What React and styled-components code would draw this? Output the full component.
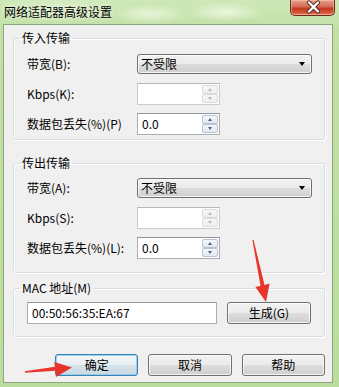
import React from 'react'
import styled, {createGlobalStyle, css} from 'styled-components'

const GlobalStyle = createGlobalStyle`
    html, body {
        margin: 0;
        padding: 0;
        background: #fff;
    }
    body {
        font-family: "Noto Sans CJK SC", "Noto Sans", sans-serif;
        font-size: 12px;
        color: #000;
    }
`

const App = () => {
    return (
        <>
            <GlobalStyle />
            <Window>
                <TitleBar>
                    <Title>网络适配器高级设置</Title>
                    <CloseButton>
                        <svg width="45" height="16" viewBox="0 0 45 16">
                            <path d="M18 3.5 L27 12.5 M27 3.5 L18 12.5" stroke="#5a2a22" strokeWidth="4.2" strokeLinecap="round" />
                            <path d="M18 3.5 L27 12.5 M27 3.5 L18 12.5" stroke="#fff" strokeWidth="2.4" strokeLinecap="round" />
                        </svg>
                    </CloseButton>
                </TitleBar>
                <Client>
                    <Group $pt={4} $pb={0}>
                        <Legend>传入传输</Legend>
                        <Row>
                            <Label>带宽(B):</Label>
                            <ComboBox>不受限<DropArrow /></ComboBox>
                        </Row>
                        <Row>
                            <Label>Kbps(K):</Label>
                            <SpinInput disabled />
                        </Row>
                        <Row>
                            <Label>数据包丢失(%)(P)</Label>
                            <SpinInput value="0.0" />
                        </Row>
                    </Group>
                    <Group $pt={3} $pb={9} $mt={16}>
                        <Legend>传出传输</Legend>
                        <Row>
                            <Label>带宽(A):</Label>
                            <ComboBox>不受限<DropArrow /></ComboBox>
                        </Row>
                        <Row>
                            <Label>Kbps(S):</Label>
                            <SpinInput disabled />
                        </Row>
                        <Row>
                            <Label>数据包丢失(%)(L):</Label>
                            <SpinInput value="0.0" />
                        </Row>
                    </Group>
                    <Group $pt={7} $pb={12} $mt={8}>
                        <Legend>MAC 地址(M)</Legend>
                        <MacRow>
                            <MacInput>00:50:56:35:EA:67</MacInput>
                            <Button>生成(G)</Button>
                        </MacRow>
                    </Group>
                    <ButtonBar>
                        <Button $default>确定</Button>
                        <Button>取消</Button>
                        <Button>帮助</Button>
                    </ButtonBar>
                </Client>
                <Arrows width="339" height="387" viewBox="0 0 339 387">
                    <polygon
                        fill="#e8352c"
                        points="253.6,239.9 264.5,285.0 269.6,283.6 266,302 255.4,286.9 260.5,285.8 252.4,240.1"
                    />
                    <polygon
                        fill="#e8352c"
                        points="25.1,372.8 55.3,370.8 55.9,377 72,367.5 54.3,362 54.9,366.8 24.9,371.2"
                    />
                </Arrows>
            </Window>
        </>
    )
}

const SpinInput = ({value, disabled}) => (
    <SpinBox $disabled={disabled}>
        <SpinText>{value}</SpinText>
        <SpinButtons>
            <SpinBtn $disabled={disabled}><Tri $up $disabled={disabled} /></SpinBtn>
            <SpinBtn $disabled={disabled}><Tri $disabled={disabled} /></SpinBtn>
        </SpinButtons>
    </SpinBox>
)

export default App;

const Window = styled.div`
    position: relative;
    width: 339px;
    height: 387px;
    box-sizing: border-box;
    padding-bottom: 4px;
    display: flex;
    flex-direction: column;
    overflow: hidden;
    background:
        radial-gradient(ellipse 40px 10px at 150px 14px, rgba(238, 248, 226, .8), transparent),
        radial-gradient(ellipse 40px 10px at 225px 12px, rgba(238, 248, 226, .9), transparent),
        radial-gradient(ellipse 60px 14px at 60px 8px, rgba(222, 240, 204, .8), transparent),
        linear-gradient(#cde8b6, #c2e0a6 30px, #bcdc9f);
`

const TitleBar = styled.div`
    height: 24px;
    flex: none;
    display: flex;
    align-items: flex-start;
`

const Title = styled.div`
    padding: 5px 0 0 4px;
    font-size: 12px;
    line-height: 14px;
    color: #000;
    text-shadow: 0 0 6px rgba(255, 255, 255, .9);
`

const CloseButton = styled.div`
    margin-left: auto;
    margin-right: 4px;
    width: 45px;
    height: 16px;
    box-sizing: border-box;
    border: 1px solid #6b2a1e;
    border-top: none;
    border-radius: 0 0 5px 5px;
    background: linear-gradient(#e7a08f 0%, #d66a55 45%, #c23a22 55%, #d4563b 85%, #e98a60 100%);
    box-shadow: inset 0 0 0 1px rgba(255, 220, 200, .45);
    svg {
        display: block;
        margin-top: -1px;
    }
`

const Client = styled.div`
    flex: 1;
    margin: 0 6px 0 3px;
    box-sizing: border-box;
    border: 1px solid #8ba77b;
    background: #f0f0f0;
    padding: 6px 7px 0 9px;
    display: flex;
    flex-direction: column;
`

const Group = styled.fieldset`
    margin: ${p => p.$mt || 0}px 0 0 0;
    padding: ${p => p.$pt}px 0 ${p => p.$pb}px 13px;
    border: 1px solid #d5dfe5;
    border-radius: 3px;
    box-shadow: inset 1px 1px 0 #fff, 1px 1px 0 #fff;
    min-width: 0;
`

const Legend = styled.legend`
    padding: 0 2px;
    margin-left: -7px;
    font-size: 12px;
    line-height: 14px;
    color: #000;
`

const Row = styled.div`
    display: flex;
    align-items: center;
    height: 30px;
`

const Label = styled.div`
    width: 110px;
    flex: none;
    white-space: nowrap;
    font-size: 12px;
    line-height: 14px;
`

const buttonFace = css`
    border: 1px solid #707070;
    border-radius: 3px;
    background: linear-gradient(#f2f2f2 0%, #ebebeb 48%, #dddddd 52%, #cfcfcf 100%);
    box-shadow: inset 0 0 0 1px rgba(255, 255, 255, .75);
`

const ComboBox = styled.div`
    ${buttonFace};
    width: 175px;
    height: 20px;
    box-sizing: border-box;
    display: flex;
    align-items: center;
    justify-content: space-between;
    padding: 0 6px 0 3px;
    font-size: 12px;
    line-height: 14px;
`

const DropArrow = styled.span`
    width: 0;
    height: 0;
    border-left: 3.5px solid transparent;
    border-right: 3.5px solid transparent;
    border-top: 4px solid #000;
`

const SpinBox = styled.div`
    width: 83px;
    height: 22px;
    box-sizing: border-box;
    display: flex;
    background: #fff;
    border: 1px solid ${p => p.$disabled ? '#c9cdd1' : '#abadb3'};
    border-top-color: ${p => p.$disabled ? '#b5b9bd' : '#8f939a'};
`

const SpinText = styled.div`
    flex: 1;
    padding-left: 4px;
    font-size: 12px;
    line-height: 19px;
`

const SpinButtons = styled.div`
    width: 17px;
    flex: none;
    display: flex;
    flex-direction: column;
    padding: 1px 1px 1px 0;
    box-sizing: border-box;
`

const SpinBtn = styled.div`
    flex: 1;
    display: flex;
    align-items: center;
    justify-content: center;
    border: 1px solid ${p => p.$disabled ? '#d9dadb' : '#b6c3d3'};
    border-radius: 2px;
    background: ${p => p.$disabled
        ? 'linear-gradient(#f7f7f7, #eeeeee)'
        : 'linear-gradient(#f6f7f9, #e3e7ee)'};
`

const Tri = styled.span`
    width: 0;
    height: 0;
    border-left: 2.5px solid transparent;
    border-right: 2.5px solid transparent;
    ${p => p.$up
        ? `border-bottom: 3px solid ${p.$disabled ? '#b8b8b8' : '#4a6190'};`
        : `border-top: 3px solid ${p.$disabled ? '#b8b8b8' : '#4a6190'};`}
`

const MacRow = styled.div`
    display: flex;
    align-items: center;
    gap: 10px;
    height: 22px;
`

const MacInput = styled.div`
    width: 190px;
    height: 22px;
    box-sizing: border-box;
    border: 1px solid #abadb3;
    border-top-color: #8f939a;
    background: #fff;
    padding-left: 4px;
    font-size: 12px;
    line-height: 19px;
`

const Button = styled.div`
    ${buttonFace};
    width: 84px;
    height: 22px;
    box-sizing: border-box;
    display: flex;
    align-items: center;
    justify-content: center;
    font-size: 12px;
    line-height: 14px;
    ${p => p.$default && css`
        border-color: #3c7fb1;
        background: linear-gradient(#f4f8fa 0%, #e6eef3 48%, #d6e2ea 52%, #c9d8e2 100%);
        box-shadow: inset 0 0 0 1px rgba(130, 200, 240, .8);
    `}
`

const ButtonBar = styled.div`
    display: flex;
    gap: 10px;
    margin-top: 17px;
    padding-left: 42px;
`

const Arrows = styled.svg`
    position: absolute;
    left: 0;
    top: 0;
    pointer-events: none;
`
